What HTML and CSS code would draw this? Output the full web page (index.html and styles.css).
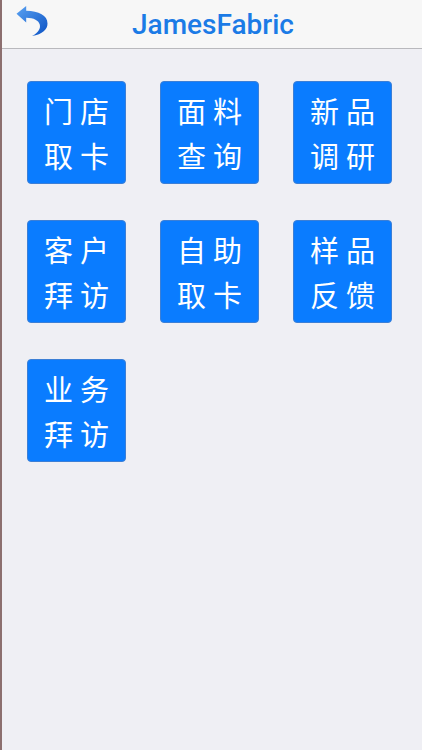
FILE: index.html
```html
<!DOCTYPE html>
<html lang="zh-CN">
<head>
<meta charset="UTF-8">
<meta name="viewport" content="width=device-width, initial-scale=1.0">
<title>JamesFabric</title>
<link rel="stylesheet" href="styles.css">
</head>
<body>
<div class="app">
    <div class="header">
        <a class="back" href="#">
            <svg width="34" height="31" viewBox="0 0 34 32">
                <defs>
                    <linearGradient id="bg" x1="0" y1="0" x2="1" y2="1">
                        <stop offset="0" stop-color="#5aa2f2"/>
                        <stop offset="1" stop-color="#0b52c4"/>
                    </linearGradient>
                </defs>
                <path d="M1 8 L11 0 L11 5 C24 5 33 10 33 18 C33 24 28 29 17 31 C24 27 26 23 25 19 C24 15 19 12 11 12 L11 17 Z" fill="url(#bg)"/>
            </svg>
        </a>
        <h1 class="title">JamesFabric</h1>
    </div>
    <div class="grid">
        <a class="tile" href="#">门店<br>取卡</a>
        <a class="tile" href="#">面料<br>查询</a>
        <a class="tile" href="#">新品<br>调研</a>
        <a class="tile" href="#">客户<br>拜访</a>
        <a class="tile" href="#">自助<br>取卡</a>
        <a class="tile" href="#">样品<br>反馈</a>
        <a class="tile" href="#">业务<br>拜访</a>
    </div>
</div>
</body>
</html>
```

FILE: styles.css
```css
body {
    margin: 0;
    padding: 0;
    font-family: Roboto, "Noto Sans CJK SC", sans-serif;
    background-color: #efeff4;
}
.app {
    min-height: 750px;
    border-left: 2px solid #8c6f6f;
    box-sizing: border-box;
}
.header {
    height: 48px;
    background-color: #f7f7f7;
    border-bottom: 1px solid #b9b9bd;
    display: flex;
    align-items: center;
    justify-content: center;
    position: relative;
}
.back {
    position: absolute;
    left: 13px;
    top: 6px;
}
.title {
    margin: 0;
    font-size: 28px;
    font-weight: 500;
    color: #1b7be6;
    margin-left: 2px;
}
.grid {
    display: grid;
    grid-template-columns: repeat(3, 99px);
    column-gap: 34px;
    row-gap: 36px;
    padding: 32px 0 0 25px;
}
.tile {
    height: 103px;
    box-sizing: border-box;
    background-color: #0a7cff;
    border: 1px solid #3c7fd6;
    border-radius: 4px;
    color: #fff;
    text-decoration: none;
    font-family: "Noto Sans CJK SC", sans-serif;
    font-size: 29px;
    line-height: 45px;
    letter-spacing: 7px;
    display: flex;
    align-items: center;
    justify-content: center;
    text-align: center;
    padding-left: 7px;
}
```
